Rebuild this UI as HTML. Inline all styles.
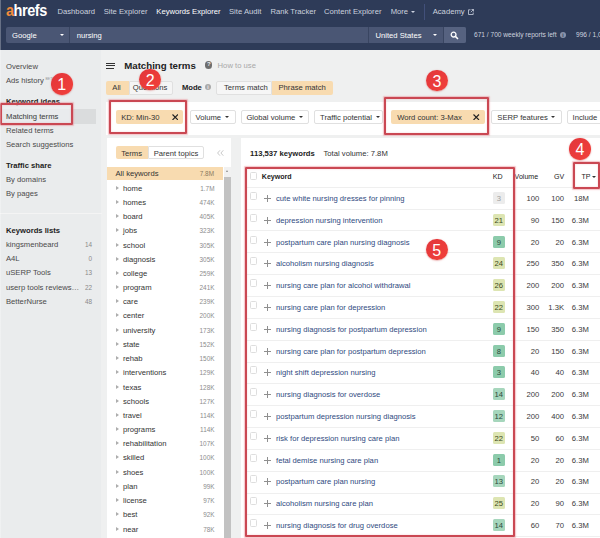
<!DOCTYPE html>
<html><head><meta charset="utf-8"><title>Matching terms</title>
<style>
*{box-sizing:border-box;margin:0;padding:0}
html,body{width:600px;height:538px;overflow:hidden}
body{position:relative;background:#eff0f0;font-family:"Liberation Sans",Arial,sans-serif;font-size:7.67px;color:#333;line-height:10px}
.a{position:absolute;white-space:nowrap}
.nv{color:#ccd2df}
.w{color:#fff}
.si{color:#4a4a4a}
.sb{color:#222;font-weight:bold}
.sn{color:#8a8a8a;width:20px;text-align:right}
.bx{background:#fff;border:1px solid #e0e0e0;border-radius:2px}
.or{background:#f8dbb0;border-radius:2px}
.red{border:2px solid #ca4853;border-radius:1px;box-shadow:0 0 1.2px 0.2px rgba(230,120,130,.45),inset 0 0 1.2px 0.2px rgba(230,120,130,.35)}
.circ{border-radius:50%;background:linear-gradient(135deg,#e2363b,#f2403a);color:#fff;font-size:16px;text-align:center;box-shadow:0 0.5px 1.5px rgba(200,40,40,.5)}
.panel{background:#fff}
.tv{width:30px;text-align:right;color:#8c8c8c}
.tri{left:116.1px;width:0;height:0;border-top:2.3px solid transparent;border-bottom:2.3px solid transparent;border-left:3px solid #adadad}
.kw{color:#2f4a80}
.plus{left:263.5px;width:7px;height:7px}
.plus:before{content:"";position:absolute;left:0;top:3px;width:7px;height:1px;background:#8f8f8f}
.plus:after{content:"";position:absolute;left:3px;top:0;width:1px;height:7px;background:#8f8f8f}
.cb{left:249.500px;width:7.6px;height:7.6px;border:1px solid #dedede;border-radius:1.5px;background:#fff}
.kd{width:12.6px;text-align:center}
.g0{background:#ececec;color:#a0a0a0}
.g1{background:#8ccbab;color:#2c4a3c}
.g3{background:#a6d6bc;color:#2c4a3c}
.g2{background:#dde5b2;color:#3c4a1c}
.num{text-align:right;color:#3a3a3a;width:40px}
.ln{left:247px;width:353px;height:1px;background:#efefef}
.th{font-weight:bold;color:#222}
.hd{color:#222}
.ct{width:0;height:0;border-left:2.2px solid transparent;border-right:2.2px solid transparent;border-top:2.600px solid #333}
</style></head><body>

<div class="a " style="left:0px;top:0px;width:600px;height:50.3px;background:#2e3b58"></div>
<div class="a" style="left:5.500px;top:2.04px;font-size:15.6px;font-weight:bold;color:#fff;line-height:18px;letter-spacing:-0.5px;transform:scaleX(0.93);transform-origin:0 0"><span style="color:#f28c3c">a</span>hrefs</div>
<div class="a nv" style="left:57.5px;top:6.67px;">Dashboard</div>
<div class="a nv" style="left:103.7px;top:6.67px;">Site Explorer</div>
<div class="a w" style="left:156.3px;top:6.67px;">Keywords Explorer</div>
<div class="a nv" style="left:229px;top:6.67px;">Site Audit</div>
<div class="a nv" style="left:270.5px;top:6.67px;">Rank Tracker</div>
<div class="a nv" style="left:324px;top:6.67px;">Content Explorer</div>
<div class="a nv" style="left:390.7px;top:6.67px;">More</div>
<div class="a nv" style="left:432.7px;top:6.67px;">Academy</div>
<div class="a ct" style="left:411px;top:10.5px;border-top-color:#ccd2df"></div>
<div class="a " style="left:423.5px;top:4px;width:1px;height:16px;background:#42507a"></div>
<svg class="a" style="left:468px;top:8.5px" width="6" height="6" viewBox="0 0 6 6"><path d="M2.500 0.800H0.500v4.700h4.700V3.500M3.500 0.500h2v2M5.500 0.500L2.800 3.200" fill="none" stroke="#ccd2df" stroke-width="0.8"/></svg>
<div class="a " style="left:6px;top:26.5px;width:460px;height:16.6px;background:#4a5674;border-radius:2px"></div>
<div class="a " style="left:443.8px;top:26.5px;width:22.2px;height:16.6px;background:#566280;border-radius:0 2px 2px 0"></div>
<div class="a " style="left:69.2px;top:26.5px;width:0.9px;height:16.6px;background:#394561"></div>
<div class="a " style="left:367.8px;top:26.5px;width:0.9px;height:16.6px;background:#394561"></div>
<div class="a " style="left:443.2px;top:26.5px;width:0.9px;height:16.6px;background:#394561"></div>
<div class="a w" style="left:12px;top:30.67px;">Google</div>
<div class="a ct" style="left:60px;top:34px;border-top-color:#fff"></div>
<div class="a w" style="left:76.7px;top:30.67px;">nursing</div>
<div class="a w" style="left:375.5px;top:30.67px;">United States</div>
<div class="a ct" style="left:432.800px;top:34px;border-top-color:#fff"></div>
<svg class="a" style="left:450px;top:30.5px" width="9" height="9" viewBox="0 0 9 9"><circle cx="3.600" cy="3.600" r="2.400" fill="none" stroke="#fff" stroke-width="1.3"/><path d="M5.400 5.400L8 8" stroke="#fff" stroke-width="1.5"/></svg>
<div class="a nv" style="left:474px;top:30.02px;font-size:6.6px;">671 / 700 weekly reports left</div>
<div class="a" style="left:560px;top:31.5px;width:6px;height:6px;border-radius:50%;background:#8993ab;color:#2c3956;font-size:5px;line-height:6px;text-align:center;font-weight:bold">i</div>
<div class="a nv" style="left:576px;top:30.02px;font-size:6.6px;">996 / 1,000</div>
<div class="a " style="left:0px;top:50.3px;width:101.2px;height:488px;background:#eaeced"></div>
<div class="a " style="left:0px;top:213px;width:101.5px;height:1px;background:#f4f4f4"></div>
<div class="a " style="left:0px;top:109px;width:96px;height:14.5px;background:#dadcdd"></div>
<div class="a si" style="left:6px;top:61.67px;">Overview</div>
<div class="a si" style="left:6px;top:75.67px;">Ads history</div>
<div class="a si" style="left:6px;top:111.67px;">Matching terms</div>
<div class="a si" style="left:6px;top:125.67px;">Related terms</div>
<div class="a si" style="left:6px;top:139.67px;">Search suggestions</div>
<div class="a si" style="left:6px;top:174.67px;">By domains</div>
<div class="a si" style="left:6px;top:188.67px;">By pages</div>
<div class="a" style="left:45.5px;top:73.5px;font-size:3.5px;color:#999">BETA</div>
<div class="a sb" style="left:6px;top:96.67px;">Keyword ideas</div>
<div class="a sb" style="left:6px;top:160.67px;">Traffic share</div>
<div class="a sb" style="left:6px;top:225.67px;">Keywords lists</div>
<div class="a si" style="left:6px;top:239.67px;">kingsmenbeard</div>
<div class="a sn" style="left:72px;top:240.08px;font-size:6.4px;">14</div>
<div class="a si" style="left:6px;top:253.67px;">A4L</div>
<div class="a sn" style="left:72px;top:254.08px;font-size:6.4px;">0</div>
<div class="a si" style="left:6px;top:267.67px;">uSERP Tools</div>
<div class="a sn" style="left:72px;top:268.08px;font-size:6.4px;">13</div>
<div class="a si" style="left:6px;top:282.67px;">userp tools reviews…</div>
<div class="a sn" style="left:72px;top:283.08px;font-size:6.4px;">22</div>
<div class="a si" style="left:6px;top:296.67px;">BetterNurse</div>
<div class="a sn" style="left:72px;top:297.08px;font-size:6.4px;">48</div>
<div class="a " style="left:106.2px;top:62.6px;width:9.3px;height:1.1px;background:#333"></div>
<div class="a " style="left:106.2px;top:65.1px;width:9.3px;height:1.1px;background:#333"></div>
<div class="a " style="left:106.2px;top:67.6px;width:7.5px;height:1.1px;background:#333"></div>
<div class="a th" style="left:124.2px;top:59.49px;font-size:9.7px;line-height:13px">Matching terms</div>
<div class="a" style="left:205.300px;top:61.4px;width:7.2px;height:7.2px;border-radius:50%;background:#6e6e6e;color:#f1f1f1;font-size:6px;line-height:7.2px;text-align:center;font-weight:bold">?</div>
<div class="a " style="left:217.6px;top:60.67px;color:#a8a8a8">How to use</div>
<div class="a or" style="left:106px;top:80.5px;width:22.5px;height:14px;border-radius:2px 0 0 2px"></div>
<div class="a bx" style="left:128.5px;top:80.5px;width:44px;height:14px;background:#f5f5f5;border-radius:0 2px 2px 0"></div>
<div class="a bx" style="left:216.4px;top:80.5px;width:55.2px;height:14px;background:#f6f6f6;border-radius:2px 0 0 2px"></div>
<div class="a or" style="left:271.6px;top:80.5px;width:61px;height:14px;border-radius:0 2px 2px 0"></div>
<div class="a " style="left:112.3px;top:82.67px;">All</div>
<div class="a " style="left:132.8px;top:82.67px;">Questions</div>
<div class="a th" style="left:181.9px;top:82.67px;">Mode</div>
<div class="a" style="left:205px;top:84.300px;width:6px;height:6px;border-radius:50%;background:#a9a9a9;color:#f1f1f1;font-size:5px;line-height:6px;text-align:center;font-weight:bold">i</div>
<div class="a " style="left:224px;top:82.67px;">Terms match</div>
<div class="a " style="left:278.5px;top:82.67px;">Phrase match</div>
<div class="a panel" style="left:105.5px;top:102px;width:495px;height:32.5px;"></div>
<div class="a or" style="left:115.5px;top:110.3px;width:67px;height:13.5px;"></div>
<div class="a or" style="left:391px;top:110.3px;width:94.2px;height:13.5px;"></div>
<div class="a " style="left:121.2px;top:112.67px;">KD: Min-30</div>
<div class="a " style="left:397.2px;top:112.67px;">Word count: 3-Max</div>
<svg class="a" style="left:171.6px;top:113.8px" width="6.5" height="6.5" viewBox="0 0 6.5 6.5"><path d="M0.500 0.500L6 6M6 0.500L0.500 6" stroke="#222" stroke-width="1.1"/></svg>
<svg class="a" style="left:473px;top:113.8px" width="6.5" height="6.5" viewBox="0 0 6.5 6.5"><path d="M0.500 0.500L6 6M6 0.500L0.500 6" stroke="#222" stroke-width="1.1"/></svg>
<div class="a bx" style="left:189.5px;top:109.8px;width:46px;height:14px;"></div>
<div class="a " style="left:195.5px;top:112.67px;">Volume</div>
<div class="a ct" style="left:225px;top:115.800px"></div>
<div class="a bx" style="left:241px;top:109.8px;width:67.5px;height:14px;"></div>
<div class="a " style="left:246.4px;top:112.67px;">Global volume</div>
<div class="a ct" style="left:298.8px;top:115.800px"></div>
<div class="a bx" style="left:314.2px;top:109.8px;width:69px;height:14px;"></div>
<div class="a " style="left:320px;top:112.67px;">Traffic potential</div>
<div class="a ct" style="left:376px;top:115.800px"></div>
<div class="a bx" style="left:491px;top:109.8px;width:71.2px;height:14px;"></div>
<div class="a " style="left:497.3px;top:112.67px;">SERP features</div>
<div class="a ct" style="left:551px;top:115.800px"></div>
<div class="a bx" style="left:567px;top:109.8px;width:40px;height:14px;"></div>
<div class="a " style="left:572.5px;top:112.67px;">Include</div>
<div class="a panel" style="left:107px;top:138.2px;width:124.2px;height:400px;"></div>
<div class="a or" style="left:115.5px;top:146.2px;width:32px;height:13.3px;border-radius:2px 0 0 2px"></div>
<div class="a bx" style="left:147.5px;top:146.2px;width:56.2px;height:13.3px;border-radius:0 2px 2px 0"></div>
<div class="a " style="left:121.2px;top:148.67px;">Terms</div>
<div class="a " style="left:153.7px;top:148.67px;">Parent topics</div>
<svg class="a" style="left:217px;top:149.800px" width="7" height="6" viewBox="0 0 7 6"><path d="M3 0.300L0.600 3L3 5.700M6.300 0.300L3.900 3L6.300 5.700" fill="none" stroke="#c2c2c2" stroke-width="0.9"/></svg>
<div class="a or" style="left:107px;top:167px;width:115.5px;height:13px;border-radius:0"></div>
<div class="a " style="left:115.5px;top:168.67px;">All keywords</div>
<div class="a tv" style="left:184px;top:169.08px;font-size:6.4px;color:#8a7a60">7.8M</div>
<div class="a " style="left:224px;top:167px;width:7.2px;height:371px;background:#f1f1f1"></div>
<div class="a " style="left:224px;top:176.5px;width:6.8px;height:362px;background:#c2c2c2"></div>
<div class="a" style="left:225.600px;top:169.5px;width:0;height:0;border-left:1.800px solid transparent;border-right:1.800px solid transparent;border-bottom:2.5px solid #8a8a8a"></div>
<div class="a tri" style="top:185.9px"></div>
<div class="a " style="left:123px;top:183.67px;">home</div>
<div class="a tv" style="left:184.5px;top:184.08px;font-size:6.4px;">1.7M</div>
<div class="a tri" style="top:199.9px"></div>
<div class="a " style="left:123px;top:197.67px;">homes</div>
<div class="a tv" style="left:184.5px;top:198.08px;font-size:6.4px;">474K</div>
<div class="a tri" style="top:213.9px"></div>
<div class="a " style="left:123px;top:211.67px;">board</div>
<div class="a tv" style="left:184.5px;top:212.08px;font-size:6.4px;">405K</div>
<div class="a tri" style="top:227.9px"></div>
<div class="a " style="left:123px;top:225.67px;">jobs</div>
<div class="a tv" style="left:184.5px;top:226.08px;font-size:6.4px;">323K</div>
<div class="a tri" style="top:242.9px"></div>
<div class="a " style="left:123px;top:240.67px;">school</div>
<div class="a tv" style="left:184.5px;top:241.08px;font-size:6.4px;">305K</div>
<div class="a tri" style="top:256.9px"></div>
<div class="a " style="left:123px;top:254.67px;">diagnosis</div>
<div class="a tv" style="left:184.5px;top:255.08px;font-size:6.4px;">305K</div>
<div class="a tri" style="top:270.9px"></div>
<div class="a " style="left:123px;top:268.67px;">college</div>
<div class="a tv" style="left:184.5px;top:269.08px;font-size:6.4px;">259K</div>
<div class="a tri" style="top:284.9px"></div>
<div class="a " style="left:123px;top:282.67px;">program</div>
<div class="a tv" style="left:184.5px;top:283.08px;font-size:6.4px;">241K</div>
<div class="a tri" style="top:298.9px"></div>
<div class="a " style="left:123px;top:296.67px;">care</div>
<div class="a tv" style="left:184.5px;top:297.08px;font-size:6.4px;">239K</div>
<div class="a tri" style="top:312.9px"></div>
<div class="a " style="left:123px;top:310.67px;">center</div>
<div class="a tv" style="left:184.5px;top:311.08px;font-size:6.4px;">200K</div>
<div class="a tri" style="top:327.9px"></div>
<div class="a " style="left:123px;top:325.67px;">university</div>
<div class="a tv" style="left:184.5px;top:326.08px;font-size:6.4px;">173K</div>
<div class="a tri" style="top:341.9px"></div>
<div class="a " style="left:123px;top:339.67px;">state</div>
<div class="a tv" style="left:184.5px;top:340.08px;font-size:6.4px;">152K</div>
<div class="a tri" style="top:355.9px"></div>
<div class="a " style="left:123px;top:353.67px;">rehab</div>
<div class="a tv" style="left:184.5px;top:354.08px;font-size:6.4px;">150K</div>
<div class="a tri" style="top:369.9px"></div>
<div class="a " style="left:123px;top:367.67px;">interventions</div>
<div class="a tv" style="left:184.5px;top:368.08px;font-size:6.4px;">129K</div>
<div class="a tri" style="top:384.9px"></div>
<div class="a " style="left:123px;top:382.67px;">texas</div>
<div class="a tv" style="left:184.5px;top:383.08px;font-size:6.4px;">128K</div>
<div class="a tri" style="top:398.9px"></div>
<div class="a " style="left:123px;top:396.67px;">schools</div>
<div class="a tv" style="left:184.5px;top:397.08px;font-size:6.4px;">127K</div>
<div class="a tri" style="top:412.9px"></div>
<div class="a " style="left:123px;top:410.67px;">travel</div>
<div class="a tv" style="left:184.5px;top:411.08px;font-size:6.4px;">114K</div>
<div class="a tri" style="top:426.9px"></div>
<div class="a " style="left:123px;top:424.67px;">programs</div>
<div class="a tv" style="left:184.5px;top:425.08px;font-size:6.4px;">114K</div>
<div class="a tri" style="top:440.9px"></div>
<div class="a " style="left:123px;top:438.67px;">rehabilitation</div>
<div class="a tv" style="left:184.5px;top:439.08px;font-size:6.4px;">107K</div>
<div class="a tri" style="top:454.9px"></div>
<div class="a " style="left:123px;top:452.67px;">skilled</div>
<div class="a tv" style="left:184.5px;top:453.08px;font-size:6.4px;">100K</div>
<div class="a tri" style="top:469.9px"></div>
<div class="a " style="left:123px;top:467.67px;">shoes</div>
<div class="a tv" style="left:184.5px;top:468.08px;font-size:6.4px;">100K</div>
<div class="a tri" style="top:483.9px"></div>
<div class="a " style="left:123px;top:481.67px;">plan</div>
<div class="a tv" style="left:184.5px;top:482.08px;font-size:6.4px;">99K</div>
<div class="a tri" style="top:497.9px"></div>
<div class="a " style="left:123px;top:495.67px;">license</div>
<div class="a tv" style="left:184.5px;top:496.08px;font-size:6.4px;">97K</div>
<div class="a tri" style="top:511.9px"></div>
<div class="a " style="left:123px;top:509.67px;">best</div>
<div class="a tv" style="left:184.5px;top:510.08px;font-size:6.4px;">92K</div>
<div class="a tri" style="top:526.9px"></div>
<div class="a " style="left:123px;top:524.67px;">near</div>
<div class="a tv" style="left:184.5px;top:525.08px;font-size:6.4px;">78K</div>
<div class="a panel" style="left:241.2px;top:138.2px;width:360px;height:400px;"></div>
<div class="a th" style="left:250.1px;top:148.67px;">113,537 keywords</div>
<div class="a " style="left:323.5px;top:148.67px;">Total volume: 7.8M</div>
<div class="a cb" style="top:172px"></div>
<div class="a th" style="left:261.8px;top:171.86px;font-size:7.08px;">Keyword</div>
<div class="a hd" style="left:492.7px;top:171.86px;font-size:7.08px;">KD</div>
<div class="a hd" style="left:514.6px;top:171.86px;font-size:7.08px;">Volume</div>
<div class="a hd" style="left:554px;top:171.86px;font-size:7.08px;">GV</div>
<div class="a hd" style="left:581.5px;top:171.86px;font-size:7.08px;">TP</div>
<div class="a ct" style="left:591.7px;top:175.5px"></div>
<div class="a ln" style="top:186.500px"></div>
<div class="a cb" style="top:192.4px"></div><div class="a plus" style="top:194.5px"></div>
<div class="a g0" style="left:492.5px;top:192.4px;width:12.6px;height:11.2px;border-radius:1.5px"></div>
<div class="a kw" style="left:276px;top:193.67px;">cute white nursing dresses for pinning</div>
<div class="a kd g0" style="left:492.5px;top:193.67px;background:none">3</div>
<div class="a num" style="left:499.2px;top:193.67px;">100</div>
<div class="a num" style="left:524px;top:193.67px;">100</div>
<div class="a num" style="left:548.8px;top:193.67px;">18M</div>
<div class="a ln" style="top:208.5px"></div>
<div class="a cb" style="top:214.4px"></div><div class="a plus" style="top:216.5px"></div>
<div class="a g2" style="left:492.5px;top:214.4px;width:12.6px;height:11.2px;border-radius:1.5px"></div>
<div class="a kw" style="left:276px;top:215.67px;">depression nursing intervention</div>
<div class="a kd g2" style="left:492.5px;top:215.67px;background:none">21</div>
<div class="a num" style="left:499.2px;top:215.67px;">90</div>
<div class="a num" style="left:524px;top:215.67px;">150</div>
<div class="a num" style="left:548.8px;top:215.67px;">6.3M</div>
<div class="a ln" style="top:230.3px"></div>
<div class="a cb" style="top:236.4px"></div><div class="a plus" style="top:238.5px"></div>
<div class="a g1" style="left:492.5px;top:236.4px;width:12.6px;height:11.2px;border-radius:1.5px"></div>
<div class="a kw" style="left:276px;top:237.67px;">postpartum care plan nursing diagnosis</div>
<div class="a kd g1" style="left:492.5px;top:237.67px;background:none">9</div>
<div class="a num" style="left:499.2px;top:237.67px;">20</div>
<div class="a num" style="left:524px;top:237.67px;">20</div>
<div class="a num" style="left:548.8px;top:237.67px;">6.3M</div>
<div class="a ln" style="top:252.2px"></div>
<div class="a cb" style="top:257.4px"></div><div class="a plus" style="top:259.5px"></div>
<div class="a g2" style="left:492.5px;top:257.4px;width:12.6px;height:11.2px;border-radius:1.5px"></div>
<div class="a kw" style="left:276px;top:258.67px;">alcoholism nursing diagnosis</div>
<div class="a kd g2" style="left:492.5px;top:258.67px;background:none">24</div>
<div class="a num" style="left:499.2px;top:258.67px;">250</div>
<div class="a num" style="left:524px;top:258.67px;">350</div>
<div class="a num" style="left:548.8px;top:258.67px;">6.3M</div>
<div class="a ln" style="top:274.1px"></div>
<div class="a cb" style="top:279.4px"></div><div class="a plus" style="top:281.5px"></div>
<div class="a g2" style="left:492.5px;top:279.4px;width:12.6px;height:11.2px;border-radius:1.5px"></div>
<div class="a kw" style="left:276px;top:280.67px;">nursing care plan for alcohol withdrawal</div>
<div class="a kd g2" style="left:492.5px;top:280.67px;background:none">26</div>
<div class="a num" style="left:499.2px;top:280.67px;">200</div>
<div class="a num" style="left:524px;top:280.67px;">200</div>
<div class="a num" style="left:548.8px;top:280.67px;">6.3M</div>
<div class="a ln" style="top:295.9px"></div>
<div class="a cb" style="top:301.4px"></div><div class="a plus" style="top:303.5px"></div>
<div class="a g2" style="left:492.5px;top:301.4px;width:12.6px;height:11.2px;border-radius:1.5px"></div>
<div class="a kw" style="left:276px;top:302.67px;">nursing care plan for depression</div>
<div class="a kd g2" style="left:492.5px;top:302.67px;background:none">22</div>
<div class="a num" style="left:499.2px;top:302.67px;">300</div>
<div class="a num" style="left:524px;top:302.67px;">1.3K</div>
<div class="a num" style="left:548.8px;top:302.67px;">6.3M</div>
<div class="a ln" style="top:317.8px"></div>
<div class="a cb" style="top:323.4px"></div><div class="a plus" style="top:325.5px"></div>
<div class="a g1" style="left:492.5px;top:323.4px;width:12.6px;height:11.2px;border-radius:1.5px"></div>
<div class="a kw" style="left:276px;top:324.67px;">nursing diagnosis for postpartum depression</div>
<div class="a kd g1" style="left:492.5px;top:324.67px;background:none">9</div>
<div class="a num" style="left:499.2px;top:324.67px;">150</div>
<div class="a num" style="left:524px;top:324.67px;">350</div>
<div class="a num" style="left:548.8px;top:324.67px;">6.3M</div>
<div class="a ln" style="top:339.6px"></div>
<div class="a cb" style="top:345.4px"></div><div class="a plus" style="top:347.5px"></div>
<div class="a g1" style="left:492.5px;top:345.4px;width:12.6px;height:11.2px;border-radius:1.5px"></div>
<div class="a kw" style="left:276px;top:346.67px;">nursing care plan for postpartum depression</div>
<div class="a kd g1" style="left:492.5px;top:346.67px;background:none">8</div>
<div class="a num" style="left:499.2px;top:346.67px;">20</div>
<div class="a num" style="left:524px;top:346.67px;">150</div>
<div class="a num" style="left:548.8px;top:346.67px;">6.3M</div>
<div class="a ln" style="top:361.5px"></div>
<div class="a cb" style="top:366.4px"></div><div class="a plus" style="top:368.5px"></div>
<div class="a g1" style="left:492.5px;top:366.4px;width:12.6px;height:11.2px;border-radius:1.5px"></div>
<div class="a kw" style="left:276px;top:367.67px;">night shift depression nursing</div>
<div class="a kd g1" style="left:492.5px;top:367.67px;background:none">3</div>
<div class="a num" style="left:499.2px;top:367.67px;">40</div>
<div class="a num" style="left:524px;top:367.67px;">40</div>
<div class="a num" style="left:548.8px;top:367.67px;">6.3M</div>
<div class="a ln" style="top:383.3px"></div>
<div class="a cb" style="top:388.4px"></div><div class="a plus" style="top:390.5px"></div>
<div class="a g3" style="left:492.5px;top:388.4px;width:12.6px;height:11.2px;border-radius:1.5px"></div>
<div class="a kw" style="left:276px;top:389.67px;">nursing diagnosis for overdose</div>
<div class="a kd g3" style="left:492.5px;top:389.67px;background:none">14</div>
<div class="a num" style="left:499.2px;top:389.67px;">200</div>
<div class="a num" style="left:524px;top:389.67px;">200</div>
<div class="a num" style="left:548.8px;top:389.67px;">6.3M</div>
<div class="a ln" style="top:405.1px"></div>
<div class="a cb" style="top:410.4px"></div><div class="a plus" style="top:412.5px"></div>
<div class="a g3" style="left:492.5px;top:410.4px;width:12.6px;height:11.2px;border-radius:1.5px"></div>
<div class="a kw" style="left:276px;top:411.67px;">postpartum depression nursing diagnosis</div>
<div class="a kd g3" style="left:492.5px;top:411.67px;background:none">12</div>
<div class="a num" style="left:499.2px;top:411.67px;">200</div>
<div class="a num" style="left:524px;top:411.67px;">400</div>
<div class="a num" style="left:548.8px;top:411.67px;">6.3M</div>
<div class="a ln" style="top:427.0px"></div>
<div class="a cb" style="top:432.4px"></div><div class="a plus" style="top:434.5px"></div>
<div class="a g2" style="left:492.5px;top:432.4px;width:12.6px;height:11.2px;border-radius:1.5px"></div>
<div class="a kw" style="left:276px;top:433.67px;">risk for depression nursing care plan</div>
<div class="a kd g2" style="left:492.5px;top:433.67px;background:none">22</div>
<div class="a num" style="left:499.2px;top:433.67px;">50</div>
<div class="a num" style="left:524px;top:433.67px;">60</div>
<div class="a num" style="left:548.8px;top:433.67px;">6.3M</div>
<div class="a ln" style="top:448.9px"></div>
<div class="a cb" style="top:454.4px"></div><div class="a plus" style="top:456.5px"></div>
<div class="a g1" style="left:492.5px;top:454.4px;width:12.6px;height:11.2px;border-radius:1.5px"></div>
<div class="a kw" style="left:276px;top:455.67px;">fetal demise nursing care plan</div>
<div class="a kd g1" style="left:492.5px;top:455.67px;background:none">1</div>
<div class="a num" style="left:499.2px;top:455.67px;">20</div>
<div class="a num" style="left:524px;top:455.67px;">20</div>
<div class="a num" style="left:548.8px;top:455.67px;">6.3M</div>
<div class="a ln" style="top:470.7px"></div>
<div class="a cb" style="top:475.4px"></div><div class="a plus" style="top:477.5px"></div>
<div class="a g3" style="left:492.5px;top:475.4px;width:12.6px;height:11.2px;border-radius:1.5px"></div>
<div class="a kw" style="left:276px;top:476.67px;">postpartum care plan nursing</div>
<div class="a kd g3" style="left:492.5px;top:476.67px;background:none">13</div>
<div class="a num" style="left:499.2px;top:476.67px;">20</div>
<div class="a num" style="left:524px;top:476.67px;">20</div>
<div class="a num" style="left:548.8px;top:476.67px;">6.3M</div>
<div class="a ln" style="top:492.6px"></div>
<div class="a cb" style="top:497.4px"></div><div class="a plus" style="top:499.5px"></div>
<div class="a g2" style="left:492.5px;top:497.4px;width:12.6px;height:11.2px;border-radius:1.5px"></div>
<div class="a kw" style="left:276px;top:498.67px;">alcoholism nursing care plan</div>
<div class="a kd g2" style="left:492.5px;top:498.67px;background:none">25</div>
<div class="a num" style="left:499.2px;top:498.67px;">20</div>
<div class="a num" style="left:524px;top:498.67px;">90</div>
<div class="a num" style="left:548.8px;top:498.67px;">6.3M</div>
<div class="a ln" style="top:514.4px"></div>
<div class="a cb" style="top:519.4px"></div><div class="a plus" style="top:521.5px"></div>
<div class="a g3" style="left:492.5px;top:519.4px;width:12.6px;height:11.2px;border-radius:1.5px"></div>
<div class="a kw" style="left:276px;top:520.67px;">nursing diagnosis for drug overdose</div>
<div class="a kd g3" style="left:492.5px;top:520.67px;background:none">14</div>
<div class="a num" style="left:499.2px;top:520.67px;">60</div>
<div class="a num" style="left:524px;top:520.67px;">70</div>
<div class="a num" style="left:548.8px;top:520.67px;">6.3M</div>
<div class="a ln" style="top:536.2px"></div>
<div class="a red" style="left:0.300px;top:102.7px;width:73px;height:22.6px;background:rgba(238,240,241,.75)"></div>
<div class="a si" style="left:6px;top:111.67px;">Matching terms</div>
<div class="a red" style="left:108.5px;top:99.8px;width:78.2px;height:34.2px"></div>
<div class="a red" style="left:384.4px;top:96.8px;width:104.8px;height:37.8px"></div>
<div class="a red" style="left:572.8px;top:162px;width:27.4px;height:27.3px"></div>
<div class="a red" style="left:244.5px;top:166.8px;width:270.8px;height:370.4px"></div>
<div class="a circ" style="left:51.05px;top:73.05px;width:21.5px;height:21.5px;line-height:23.5px">1</div>
<div class="a circ" style="left:139.35px;top:68.55px;width:21.5px;height:21.5px;line-height:23.5px">2</div>
<div class="a circ" style="left:426.25px;top:69.55px;width:21.5px;height:21.5px;line-height:23.5px">3</div>
<div class="a circ" style="left:569.15px;top:138.05px;width:21.5px;height:21.5px;line-height:23.5px">4</div>
<div class="a circ" style="left:426.05px;top:238.75px;width:21.5px;height:21.5px;line-height:23.5px">5</div>
<div class="a " style="left:0px;top:0px;width:1.2px;height:538px;background:linear-gradient(90deg,rgba(255,255,255,.55),rgba(255,255,255,0))"></div>
</body></html>
